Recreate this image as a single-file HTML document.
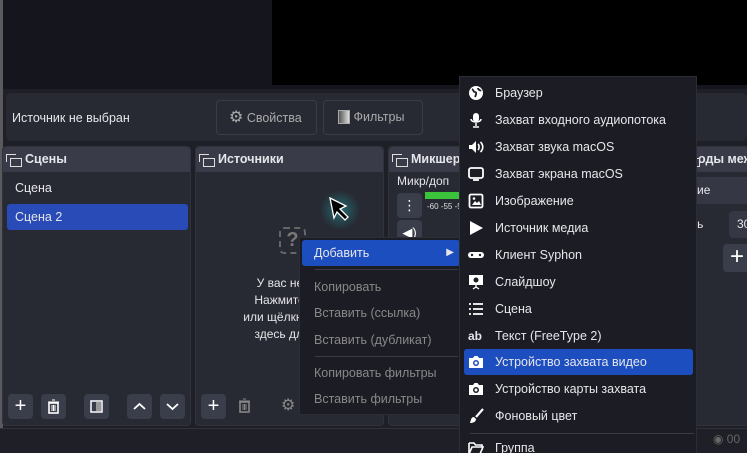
<!DOCTYPE html>
<html><head><meta charset="utf-8"><style>
*{box-sizing:border-box;margin:0;padding:0}
html,body{width:747px;height:453px;overflow:hidden}
body{background:#1e1f27;font-family:"Liberation Sans","DejaVu Sans",sans-serif;font-size:12px;color:#e6e6ea;position:relative}
.abs{position:absolute}
.dock{position:absolute;top:146px;height:280px;background:#272a33;border-radius:4px;border:1px solid #30323c}
.dh{height:25px;background:#393c48;font-weight:bold;font-size:12.5px;line-height:25px;padding-left:22px;position:relative;border-radius:4px 4px 0 0;white-space:nowrap}
.dh:before{content:"";position:absolute;left:3px;top:7px;width:9px;height:7px;border:1.5px solid #ddd;border-right:none;border-bottom:none}
.dh:after{content:"";position:absolute;left:7px;top:11px;width:10px;height:7px;border:1.5px solid #ddd;background:#393c48}
.btn{position:absolute;width:25px;height:25px;background:#3a3d4a;border-radius:4px;color:#fff;text-align:center;line-height:25px;font-size:20px}
.btn svg{position:absolute;left:5px;top:5px}
.menu{position:absolute;background:#1c1d24;border:1px solid #2c2e37}
.mi{position:absolute;left:0;height:26px;line-height:26px;font-size:12.5px;white-space:nowrap}
.sep{position:absolute;height:1px;background:#3a3c46}
.ic{position:absolute;left:8px;top:5px;width:16px;height:16px}
</style></head><body>
<div class="abs" style="left:0;top:0;width:747px;height:89px;background:#15151d"></div>
<div class="abs" style="left:0;top:0;width:3px;height:453px;background:#5a5a5e"></div>
<div class="abs" style="left:272px;top:0;width:475px;height:85px;background:#000"></div>
<div class="abs" style="left:6px;top:93px;width:741px;height:48px;background:#272a33;border-radius:5px"></div>
<div class="abs" style="left:12px;top:111px;font-size:12.5px">Источник не выбран</div>
<div class="abs" style="left:216px;top:100px;width:101px;height:35px;border:1px solid #3a3d48;border-radius:4px;color:#aaa;font-size:12.5px;line-height:33px;padding-left:12px"><span style="font-size:16px;color:#aaa">⚙</span> Свойства</div>
<div class="abs" style="left:323px;top:100px;width:100px;height:35px;border:1px solid #3a3d48;border-radius:4px;color:#aaa;font-size:12.5px;line-height:33px;padding-left:14px"><span style="display:inline-block;width:12px;height:14px;border:1.5px solid #aaa;background:linear-gradient(90deg,#555,#ddd);vertical-align:-3px"></span> Фильтры</div>

<div class="dock" style="left:2px;width:189px"><div class="dh">Сцены</div>
<div class="abs" style="left:12px;top:34px;font-size:12.5px">Сцена</div>
<div class="abs" style="left:4px;top:57px;width:181px;height:26px;background:#284bb8;border-radius:3px;padding-left:8px;line-height:26px;font-size:12.5px">Сцена 2</div>
<div class="btn" style="left:5px;top:247px">+</div>
<div class="btn" style="left:38px;top:247px"><svg width="15" height="15"><rect x="3" y="4" width="9" height="10" fill="none" stroke="#fff" stroke-width="1.6"/><path d="M2 3h11M6 1h3M6 6v6M7.5 6v6M9 6v6" stroke="#fff" stroke-width="1"/></svg></div>
<div class="btn" style="left:81px;top:247px"><svg width="15" height="15"><rect x="2" y="2" width="11" height="11" fill="none" stroke="#fff" stroke-width="1.5"/><rect x="7" y="3" width="5" height="9" fill="#999"/></svg></div>
<div class="btn" style="left:124px;top:247px"><svg width="15" height="15"><path d="M2 10l5.5-5 5.5 5" fill="none" stroke="#fff" stroke-width="1.8"/></svg></div>
<div class="btn" style="left:157px;top:247px"><svg width="15" height="15"><path d="M2 5l5.5 5 5.5-5" fill="none" stroke="#fff" stroke-width="1.8"/></svg></div>
</div>
<div class="dock" style="left:195px;width:189px"><div class="dh">Источники</div>
<div class="abs" style="left:83px;top:80px;width:27px;height:27px;border:2px dashed #666;border-radius:5px;color:#777;font-size:20px;font-weight:bold;text-align:center;line-height:23px">?</div>
<div class="abs" style="left:0;top:128px;width:189px;text-align:center;font-size:12px;line-height:17px">У вас нет ис<br>Нажмите кно<br>или щёлкните пр<br>здесь для до</div>
<div class="btn" style="left:5px;top:247px">+</div>
<div class="abs" style="left:41px;top:251px"><svg width="15" height="15"><rect x="3" y="4" width="9" height="10" fill="none" stroke="#888" stroke-width="1.6"/><path d="M2 3h11M6 1h3M6 6v6M7.5 6v6M9 6v6" stroke="#888" stroke-width="1"/></svg></div>
<div class="abs" style="left:85px;top:248px;color:#888;font-size:16px">⚙</div>
</div>
<div class="dock" style="left:388px;width:90px;overflow:hidden"><div class="dh">Микшер</div>
<div class="abs" style="left:8px;top:27px;font-size:12px">Микр/доп</div>
<div class="btn" style="left:8px;top:46px;font-size:14px;line-height:25px">⋮</div>
<div class="btn" style="left:8px;top:73px;font-size:13px">◀)</div>
<div class="abs" style="left:36px;top:45px;width:60px;height:7px;background:#3bc43b"></div>
<div class="abs" style="left:38px;top:55px;font-size:8px;color:#ddd">-60 -55 -5</div>
<div class="abs" style="left:36px;top:91px;width:60px;height:2px;background:#2c57d0"></div>
</div>
<div class="dock" style="left:680px;width:70px;overflow:hidden"><div class="dh" style="padding-left:17px">оды меж</div>
<div class="abs" style="left:-10px;top:30px;width:80px;height:27px;background:#353844;border-radius:4px;padding-left:26px;line-height:27px">ие</div>
<div class="abs" style="left:-2px;top:68px;line-height:18px">ость</div>
<div class="abs" style="left:48px;top:64px;width:30px;height:27px;background:#353844;border-radius:4px;padding-left:8px;line-height:27px">30</div>
<div class="btn" style="left:42px;top:97px;width:28px;height:28px;font-size:24px">+</div>
</div>
<div class="abs" style="left:0;top:428px;width:747px;height:25px;background:#1e1f27;border-top:1px solid #30323c"></div>
<div class="abs" style="left:713px;top:432px;color:#666;font-size:12px">◉ 00</div>

<svg class="abs" style="left:318px;top:188px" width="45" height="45"><defs><radialGradient id="g"><stop offset="0" stop-color="#2aa" stop-opacity=".5"/><stop offset="1" stop-color="#2aa" stop-opacity="0"/></radialGradient></defs><circle cx="22" cy="22" r="20" fill="url(#g)"/><path d="M12 10 L28 18 L22 21 L30 29 L27 32 L19 24 L16 30 Z" fill="#000" stroke="#fff" stroke-width="1.3"/></svg>

<div class="menu" style="left:299px;top:237px;width:162px;height:178px">
<div class="mi" style="left:2px;top:2px;width:158px;background:#1d4ec0;border-radius:3px;padding-left:12px">Добавить<span style="position:absolute;right:6px;font-size:10px">▶</span></div>
<div class="sep" style="left:15px;top:31px;width:143px"></div>
<div class="mi" style="left:14px;top:36px;color:#888">Копировать</div>
<div class="mi" style="left:14px;top:62px;color:#888">Вставить (ссылка)</div>
<div class="mi" style="left:14px;top:89px;color:#888">Вставить (дубликат)</div>
<div class="sep" style="left:15px;top:118px;width:143px"></div>
<div class="mi" style="left:14px;top:122px;color:#888">Копировать фильтры</div>
<div class="mi" style="left:14px;top:148px;color:#888">Вставить фильтры</div>
</div>

<div class="menu" style="left:459px;top:76px;width:238px;height:377px;border-bottom:none">
<div class="mi" style="left:4px;top:272px;width:229px;background:#1d4ec0;border-radius:3px"></div>
<div class="mi" style="top:3px"><svg class="ic" viewBox="0 0 16 16"><circle cx="8" cy="8" r="7" fill="#fff"/><path d="M4 4c2 1 1 3 3 3s1 3 0 5M10 3c0 2 2 2 3 3" stroke="#1c1d24" stroke-width="1.8" fill="none"/></svg><span style="padding-left:35px">Браузер</span></div>
<div class="mi" style="top:30px"><svg class="ic" viewBox="0 0 16 16"><rect x="5" y="1" width="6" height="9" rx="3" fill="#fff"/><path d="M3 7c0 4 10 4 10 0M8 11v3M5 15h6" stroke="#fff" stroke-width="1.5" fill="none"/></svg><span style="padding-left:35px">Захват входного аудиопотока</span></div>
<div class="mi" style="top:57px"><svg class="ic" viewBox="0 0 16 16"><path d="M1 6h3l4-4v12l-4-4H1z" fill="#fff"/><path d="M10 5c1.5 1.5 1.5 4.5 0 6M12.5 3c3 3 3 7 0 10" stroke="#fff" stroke-width="1.6" fill="none"/></svg><span style="padding-left:35px">Захват звука macOS</span></div>
<div class="mi" style="top:84px"><svg class="ic" viewBox="0 0 16 16"><rect x="1" y="2" width="14" height="10" rx="2" fill="none" stroke="#fff" stroke-width="1.8"/><path d="M5 14h6" stroke="#fff" stroke-width="1.8"/></svg><span style="padding-left:35px">Захват экрана macOS</span></div>
<div class="mi" style="top:111px"><svg class="ic" viewBox="0 0 16 16"><rect x="1.5" y="1.5" width="13" height="13" rx="1.5" fill="none" stroke="#fff" stroke-width="1.8"/><path d="M4 12l3-4 2 2 2-2 2 4z" fill="#fff"/><circle cx="6" cy="5.5" r="1.3" fill="#fff"/></svg><span style="padding-left:35px">Изображение</span></div>
<div class="mi" style="top:138px"><svg class="ic" viewBox="0 0 16 16"><path d="M2 1l13 7-13 7z" fill="#fff"/></svg><span style="padding-left:35px">Источник медиа</span></div>
<div class="mi" style="top:165px"><svg class="ic" viewBox="0 0 16 16"><rect x="0" y="5" width="16" height="6" rx="3" fill="#fff"/><circle cx="4" cy="8" r="1.2" fill="#1c1d24"/><circle cx="12" cy="8" r="1.2" fill="#1c1d24"/></svg><span style="padding-left:35px">Клиент Syphon</span></div>
<div class="mi" style="top:192px"><svg class="ic" viewBox="0 0 16 16"><rect x="1" y="1" width="14" height="10" fill="#fff"/><circle cx="8" cy="6" r="2.5" fill="#1c1d24"/><path d="M8 11v3M5 15l3-2 3 2" stroke="#fff" stroke-width="1.3" fill="none"/></svg><span style="padding-left:35px">Слайдшоу</span></div>
<div class="mi" style="top:219px"><svg class="ic" viewBox="0 0 16 16"><path d="M1 3h2M1 8h2M1 13h2M5 3h10M5 8h10M5 13h10" stroke="#fff" stroke-width="1.8"/></svg><span style="padding-left:35px">Сцена</span></div>
<div class="mi" style="top:246px"><span style="position:absolute;left:8px;font-size:12px;font-weight:bold">ab</span><span style="padding-left:35px">Текст (FreeType 2)</span></div>
<div class="mi" style="top:272px"><svg class="ic" viewBox="0 0 16 16"><path d="M1 4h4l1.5-2h3L11 4h4v10H1z" fill="#fff"/><circle cx="8" cy="9" r="3" fill="#1d4ec0"/><circle cx="8" cy="9" r="1.5" fill="#fff"/></svg><span style="padding-left:35px">Устройство захвата видео</span></div>
<div class="mi" style="top:299px"><svg class="ic" viewBox="0 0 16 16"><path d="M1 4h4l1.5-2h3L11 4h4v10H1z" fill="#fff"/><circle cx="8" cy="9" r="3" fill="#1c1d24"/><circle cx="8" cy="9" r="1.5" fill="#fff"/></svg><span style="padding-left:35px">Устройство карты захвата</span></div>
<div class="mi" style="top:326px"><svg class="ic" viewBox="0 0 16 16"><path d="M15 1L8 9" stroke="#fff" stroke-width="2.2"/><path d="M6 9c-3 0-3 3-4 6 3 0 6-1 6-4z" fill="#fff"/></svg><span style="padding-left:35px">Фоновый цвет</span></div>
<div class="sep" style="left:10px;top:356px;width:224px"></div>
<div class="mi" style="top:358px"><svg class="ic" viewBox="0 0 16 16"><path d="M1 3h5l1.5 2H14v2M1 3v11h11l3-7H4L1 14" fill="none" stroke="#fff" stroke-width="1.6"/></svg><span style="padding-left:35px">Группа</span></div>
</div>
</body></html>
